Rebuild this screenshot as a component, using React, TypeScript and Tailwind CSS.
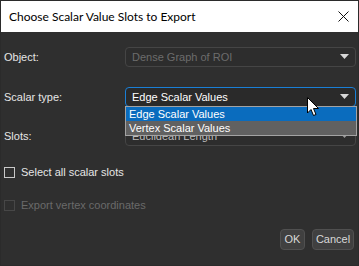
import { useState } from "react"

function Caret({ dim }: { dim?: boolean }) {
    return (
        <svg width="9" height="6" viewBox="0 0 9 6" className="shrink-0">
            <path d="M0 0 H9 L4.5 5 Z" fill={dim ? "#9a9a9a" : "#d8d8d8"} />
        </svg>
    )
}

function App() {
    const [selectAll, setSelectAll] = useState(false)

    return (
        <div className="w-[359px] h-[266px] bg-[#2b2b2b] p-px flex flex-col relative" style={{ fontFamily: "'Liberation Sans', Arial, sans-serif" }}>
            {/* title bar */}
            <div className="h-[31px] bg-white flex items-center justify-between pl-[8px] pr-[9px] shrink-0">
                <span className="text-[12px] text-black" style={{ fontFamily: "Lato, 'Noto Sans', sans-serif" }}>Choose Scalar Value Slots to Export</span>
                <svg width="11" height="11" viewBox="0 0 11 11">
                    <path d="M0.5 0.5 L10.5 10.5 M10.5 0.5 L0.5 10.5" stroke="#111" strokeWidth="1" />
                </svg>
            </div>

            <div className="flex-1 bg-[#2f2f2f] flex flex-col text-[11px] text-[#e6e6e6] px-[2px]">
                {/* object row */}
                <div className="flex items-center mt-[15px] h-[20px]">
                    <span className="w-[122px] pl-[1px]">Object:</span>
                    <div className="flex-1 h-[20px] rounded-[4px] border border-[#454545] bg-[#2d2d2d] flex items-center justify-between pl-[6px] pr-[6px]">
                        <span className="text-[#6c6c6c]">Dense Graph of ROI</span>
                        <Caret />
                    </div>
                </div>

                {/* scalar type row */}
                <div className="flex items-center mt-[20px] h-[20px]">
                    <span className="w-[122px] pl-[1px]">Scalar type:</span>
                    <div className="flex-1 h-[20px] rounded-[4px] border border-[#1a7fd6] bg-[#2a2a2a] flex items-center justify-between pl-[6px] pr-[6px] relative">
                        <span className="text-white">Edge Scalar Values</span>
                        <Caret />
                        <div className="absolute left-[-1px] right-[-2px] top-[18px] border border-[#a3a3a3] bg-[#5e5e5e] z-10">
                            <div className="h-[14px] bg-[#0a6cbe] text-white flex items-center pl-[3px]">Edge Scalar Values</div>
                            <div className="h-[14px] bg-[#616161] text-white flex items-center pl-[3px]">Vertex Scalar Values</div>
                        </div>
                    </div>
                </div>

                {/* slots row */}
                <div className="flex items-center mt-[19px] h-[20px]">
                    <span className="w-[122px] pl-[1px]">Slots:</span>
                    <div className="flex-1 h-[20px] rounded-[4px] border border-[#454545] bg-[#2d2d2d] flex items-center justify-between pl-[6px] pr-[6px]">
                        <span className="text-[#bdbdbd]">Euclidean Length</span>
                        <Caret dim />
                    </div>
                </div>

                {/* checkboxes */}
                <label className="flex items-center mt-[16px] h-[20px] gap-[6px] pl-[1px] cursor-pointer">
                    <span className="w-[11px] h-[11px] border border-[#c8c8c8] bg-[#2f2f2f]" onClick={() => setSelectAll(!selectAll)} />
                    <span>Select all scalar slots</span>
                </label>
                <div className="flex items-center mt-[13px] h-[20px] gap-[6px] pl-[1px]">
                    <span className="w-[11px] h-[11px] border border-[#474747]" />
                    <span className="text-[#6a6a6a]">Export vertex coordinates</span>
                </div>

                {/* buttons */}
                <div className="flex justify-end gap-[7px] mt-auto mb-[15px] pr-[2px]">
                    <button className="h-[21px] w-[25px] rounded-[4px] border border-[#505050] bg-[#404040] text-[#d8d8d8] text-[11px]">OK</button>
                    <button className="h-[21px] w-[42px] rounded-[4px] border border-[#505050] bg-[#404040] text-[#d8d8d8] text-[11px]">Cancel</button>
                </div>
            </div>

            {/* mouse pointer */}
            <svg className="absolute left-[307px] top-[97px] z-20" width="13" height="20" viewBox="0 0 13 20">
                <path d="M0.5 0.5 V16 L4 12.5 L6.5 18.5 L9 17.5 L6.5 11.5 H11.5 Z" fill="white" stroke="black" strokeWidth="1" />
            </svg>
        </div>
    )
}
export default App
